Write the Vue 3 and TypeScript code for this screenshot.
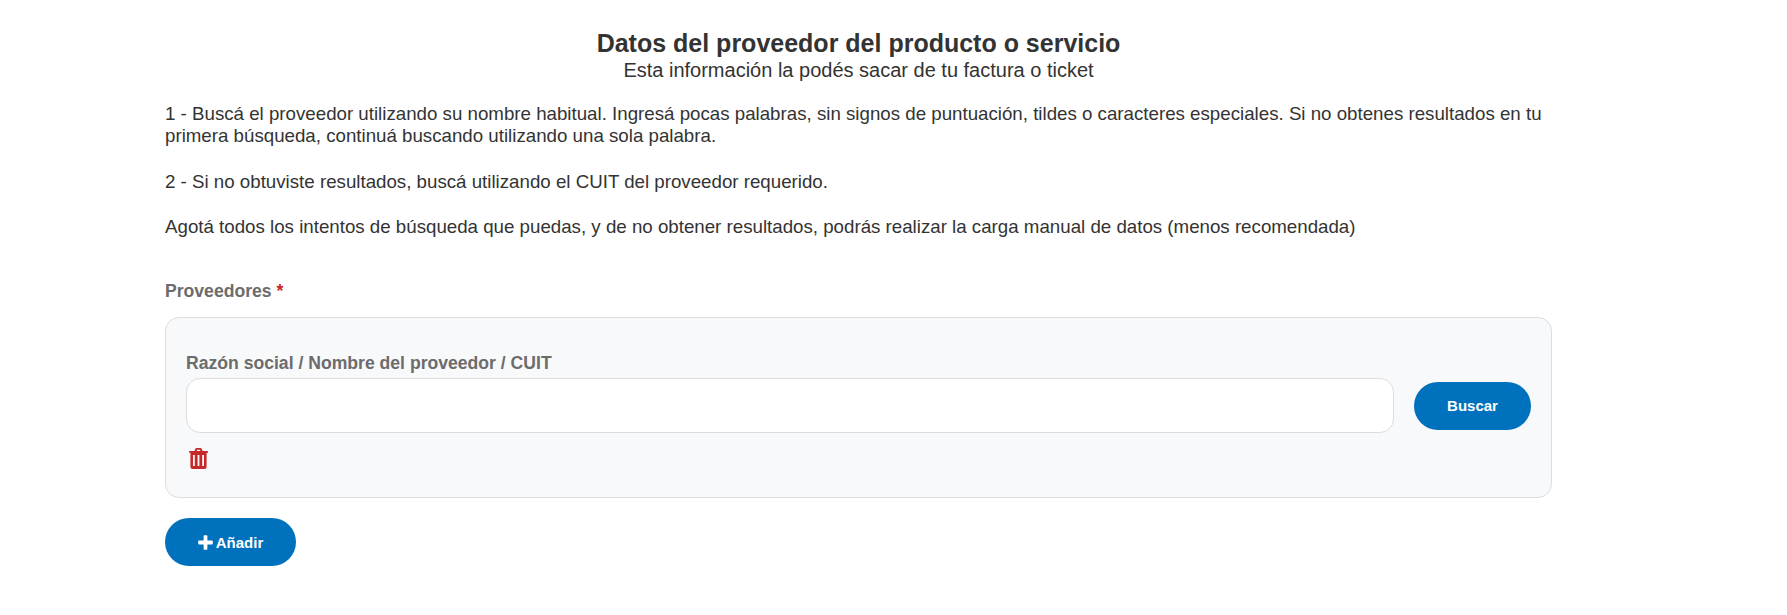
<script setup lang="ts">
import { ref } from 'vue';

const query = ref('');

const instructions = [
    '1 - Buscá el proveedor utilizando su nombre habitual. Ingresá pocas palabras, sin signos de puntuación, tildes o caracteres especiales. Si no obtenes resultados en tu primera búsqueda, continuá buscando utilizando una sola palabra.',
    '2 - Si no obtuviste resultados, buscá utilizando el CUIT del proveedor requerido.',
    'Agotá todos los intentos de búsqueda que puedas, y de no obtener resultados, podrás realizar la carga manual de datos (menos recomendada)',
];
</script>

<template>
    <div class="page">
        <header class="heading">
            <h1>Datos del proveedor del producto o servicio</h1>
            <p>Esta información la podés sacar de tu factura o ticket</p>
        </header>

        <div class="instructions">
            <p v-for="text in instructions" :key="text">{{ text }}</p>
        </div>

        <div class="fieldLabel">Proveedores <span class="required">*</span></div>

        <div class="panel">
            <label class="inputLabel" for="provider">Razón social / Nombre del proveedor / CUIT</label>
            <div class="searchRow">
                <input id="provider" v-model="query" class="textInput" type="text" />
                <button type="button" class="pill searchButton">Buscar</button>
            </div>
            <button type="button" class="trash" aria-label="Eliminar">
                <svg width="19" height="21" viewBox="0 0 19 21">
                    <path fill="#c62828" fill-rule="evenodd"
                        d="M5.5 3 L6.2 1.1 Q6.6 0 7.8 0 L11.2 0 Q12.4 0 12.8 1.1 L13.5 3 L18.3 3 Q19 3 19 3.7 L19 4.8 L17.6 4.8 L17.6 18.8 Q17.6 21 15.4 21 L3.6 21 Q1.4 21 1.4 18.8 L1.4 4.8 L0 4.8 L0 3.7 Q0 3 0.7 3 Z M7.6 3 L11.4 3 L11 1.8 L8 1.8 Z M4 7 H5.8 V18 H4 Z M8.6 7 H10.4 V18 H8.6 Z M13.2 7 H15 V18 H13.2 Z" />
                </svg>
            </button>
        </div>

        <button type="button" class="pill addButton">
            <svg width="15" height="15" viewBox="0 0 15 15">
                <path fill="#fff" d="M5.6 1 Q5.6 0.2 6.4 0.2 H8.6 Q9.4 0.2 9.4 1 V5.6 H14 Q14.8 5.6 14.8 6.4 V8.6 Q14.8 9.4 14 9.4 H9.4 V14 Q9.4 14.8 8.6 14.8 H6.4 Q5.6 14.8 5.6 14 V9.4 H1 Q0.2 9.4 0.2 8.6 V6.4 Q0.2 5.6 1 5.6 H5.6 Z" />
            </svg>
            Añadir
        </button>
    </div>
</template>

<style scoped>
.page {
    width: 1387px;
    margin-left: 165px;
    padding-top: 29px;
    font-family: "Liberation Sans", Arial, sans-serif;
    color: #333333;
}

.heading {
    text-align: center;
}

.heading h1 {
    margin: 0;
    font-size: 25px;
    line-height: 29px;
    font-weight: 700;
}

.heading p {
    margin: 0;
    font-size: 20px;
    line-height: 24px;
}

.instructions {
    margin-top: 21px;
    font-size: 18.72px;
    line-height: 22px;
}

.instructions p {
    margin: 0 0 23.5px;
}

.instructions p:last-child {
    margin-bottom: 0;
}

.fieldLabel {
    margin-top: 43px;
    font-size: 17.6px;
    line-height: 20px;
    font-weight: 700;
    color: #6c6c6c;
}

.required {
    color: #c62828;
}

.panel {
    margin-top: 16px;
    height: 181px;
    box-sizing: border-box;
    padding: 35px 20px 0;
    background: #f8f9fb;
    border: 1px solid #dddddd;
    border-radius: 14px;
}

.inputLabel {
    display: block;
    font-size: 17.6px;
    line-height: 20px;
    font-weight: 700;
    color: #6c6c6c;
}

.searchRow {
    display: flex;
    align-items: center;
    gap: 20px;
    margin-top: 5px;
}

.textInput {
    flex: 1;
    height: 55px;
    box-sizing: border-box;
    background: #ffffff;
    border: 1px solid #dddddd;
    border-radius: 14px;
    outline: none;
}

.pill {
    height: 48px;
    border: none;
    border-radius: 24px;
    background: #0071bc;
    color: #ffffff;
    font-family: "Liberation Sans", Arial, sans-serif;
    font-size: 15px;
    font-weight: 700;
}

.searchButton {
    width: 117px;
}

.trash {
    display: block;
    margin-top: 15px;
    margin-left: 3px;
    padding: 0;
    border: none;
    background: none;
    line-height: 0;
}

.addButton {
    display: flex;
    align-items: center;
    justify-content: center;
    gap: 3px;
    width: 131px;
    margin-top: 20px;
}
</style>

<style>
html,
body {
    background: #ffffff;
}
</style>
